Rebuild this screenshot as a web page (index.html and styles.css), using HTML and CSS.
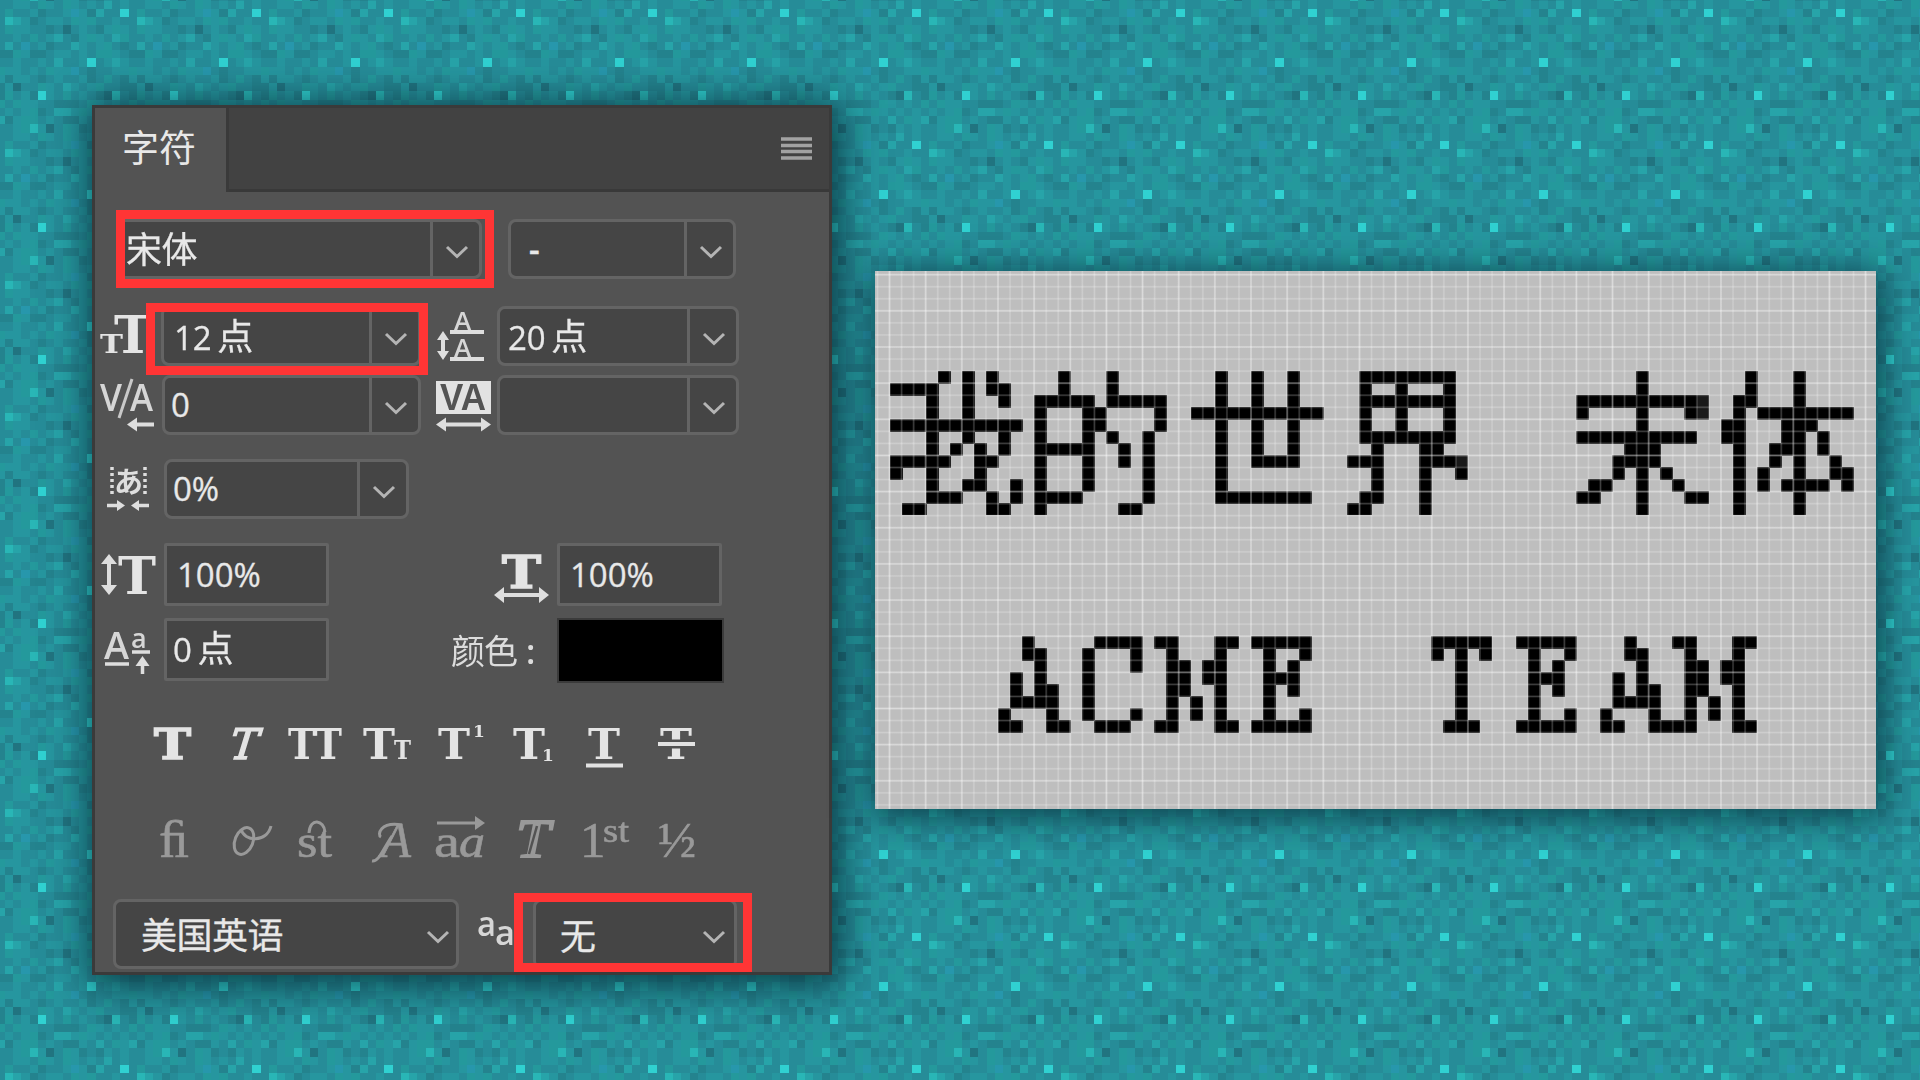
FILE: index.html
```
<!DOCTYPE html>
<html lang="zh-CN">
<head>
<meta charset="utf-8">
<title>字符</title>
<link rel="stylesheet" href="styles.css">
</head>
<body>
<canvas class="backdrop" id="backdrop" width="1920" height="1080"></canvas>
<svg class="defs" width="0" height="0">
  <defs>
    <symbol id="chev" viewBox="0 0 24 14"><path d="M2 2 L12 11.5 L22 2" fill="none" stroke="#b4b4b4" stroke-width="3"/></symbol>
    <filter id="pixelate" filterUnits="userSpaceOnUse" x="0" y="0" width="156" height="144" color-interpolation-filters="sRGB">
      <feGaussianBlur in="SourceGraphic" stdDeviation="2" result="soft"/>
      <feFlood x="6" y="6" width="1" height="1" flood-color="#000" result="dot"/>
      <feOffset in="dot" dx="0" dy="0" x="0" y="0" width="12" height="12" result="cell"/>
      <feTile in="cell" x="0" y="0" width="156" height="144" result="dots"/>
      <feComposite in="soft" in2="dots" operator="in"/>
      <feComponentTransfer><feFuncA type="linear" slope="200" intercept="-76"/></feComponentTransfer>
      <feMorphology operator="dilate" radius="6"/>
    </filter>
  </defs>
</svg>
<main class="stage">
  <section class="panel">
    <header class="tabs">
      <div class="tab">字符</div>
      <svg class="burger" width="31" height="24" viewBox="0 0 31 24"><path d="M0 2H31M0 8.500H31M0 14.500H31M0 21H31" stroke="#a2a2a2" stroke-width="3.600"/></svg>
    </header>
    <div class="row r1">
      <div class="marked font"><div class="field"><span class="cjk">宋体</span><i><svg><use href="#chev"/></svg></i></div></div>
      <div class="field style"><span>-</span><i><svg><use href="#chev"/></svg></i></div>
    </div>
    <div class="row r2">
      <svg class="ic" width="50" height="60"><g class="slab"><text x="0" y="47" font-size="26" textLength="23" lengthAdjust="spacingAndGlyphs">T</text><text x="14" y="47" font-size="53" textLength="38" lengthAdjust="spacingAndGlyphs">T</text></g></svg>
      <div class="marked size"><div class="field"><span>12 <b class="cjk">点</b></span><i><svg><use href="#chev"/></svg></i></div></div>
      <svg class="ic lead" width="50" height="60"><g class="sans"><text x="17" y="24" font-size="26">A</text><text x="17" y="51" font-size="26">A</text></g><path d="M13 26H47M13 53H47M6 31V48" stroke="#dedede" stroke-width="4"/><path d="M6 25l6 9H0zM6 54l6-9H0z" fill="#dedede"/></svg>
      <div class="field wide"><span>20 <b class="cjk">点</b></span><i><svg><use href="#chev"/></svg></i></div>
    </div>
    <div class="row r3">
      <svg class="ic" width="58" height="60"><g class="sans"><text x="0" y="36" font-size="37" textLength="22" lengthAdjust="spacingAndGlyphs">V</text><text x="30" y="36" font-size="37" textLength="23" lengthAdjust="spacingAndGlyphs">A</text></g><path d="M32 4L19 43" stroke="#c8c8c8" stroke-width="3"/><path d="M34 49.500H54" stroke="#dedede" stroke-width="4"/><path d="M27 49.500l10-7v14z" fill="#dedede"/></svg>
      <div class="field kern"><span>0</span><i><svg><use href="#chev"/></svg></i></div>
      <svg class="ic track" width="56" height="60"><rect x="0" y="6" width="55" height="33" fill="#e2e2e2"/><text class="va" x="4" y="35" font-size="36" textLength="46" lengthAdjust="spacingAndGlyphs">VA</text><path d="M8 49.500H47" stroke="#dedede" stroke-width="4"/><path d="M0 49.500l10-7v14zM55 49.500l-10-7v14z" fill="#dedede"/></svg>
      <div class="field wide"><span></span><i><svg><use href="#chev"/></svg></i></div>
    </div>
    <div class="row r4">
      <svg class="ic" width="44" height="60"><path d="M5 8V37M38 8V37" stroke="#dedede" stroke-width="3.500" stroke-dasharray="3 3"/><text class="kana" x="7" y="34" font-size="29">あ</text><path d="M0 46.500H12M42 46.500H30" stroke="#dedede" stroke-width="3.500"/><path d="M18 46.500l-8-5.500v11zM24 46.500l8-5.500v11z" fill="#dedede"/></svg>
      <div class="field tsume"><span>0%</span><i><svg><use href="#chev"/></svg></i></div>
    </div>
    <div class="row r5">
      <svg class="ic" width="58" height="62"><path d="M8 18V43" stroke="#dedede" stroke-width="4"/><path d="M8 11l8 10H0zM8 52l8-10H0z" fill="#dedede"/><text class="slab" x="17" y="51" font-size="52" textLength="38" lengthAdjust="spacingAndGlyphs">T</text></svg>
      <div class="field plain"><span>100%</span></div>
      <svg class="ic hs" width="56" height="62"><text class="slab thick" x="8" y="44.500" font-size="44" textLength="39" lengthAdjust="spacingAndGlyphs">T</text><path d="M8 52H47" stroke="#dedede" stroke-width="4"/><path d="M0 52l10-8v16zM55 52l-10-8v16z" fill="#dedede"/></svg>
      <div class="field plain"><span>100%</span></div>
    </div>
    <div class="row r6">
      <svg class="ic" width="50" height="64"><g class="sans"><text x="0" y="41" font-size="37" textLength="25" lengthAdjust="spacingAndGlyphs">A</text><text x="27" y="30" font-size="27">a</text></g><path d="M1 46H25M28 34H46M38.500 44V56" stroke="#dedede" stroke-width="3.500"/><path d="M38.500 38l7 10h-14z" fill="#dedede"/></svg>
      <div class="field plain zero"><span>0 <b class="cjk">点</b></span></div>
      <div class="label">颜色<b>:</b></div>
      <div class="swatch"></div>
    </div>
    <div class="row r7">
      <svg class="strip" width="640" height="60" viewBox="135 710 640 60"><g class="slab" font-size="42">
        <text x="154" y="759.500" textLength="37" lengthAdjust="spacingAndGlyphs" class="heavy">T</text>
        <text transform="translate(226 759.500) skewX(-17)" textLength="28" lengthAdjust="spacingAndGlyphs" x="0" y="0" class="lt">T</text>
        <text x="288" y="759.500" textLength="54" lengthAdjust="spacingAndGlyphs">TT</text>
        <text x="363" y="759.500" textLength="32" lengthAdjust="spacingAndGlyphs">T</text><text x="394" y="759.500" font-size="26" textLength="17" lengthAdjust="spacingAndGlyphs">T</text>
        <text x="438" y="759.500" textLength="32" lengthAdjust="spacingAndGlyphs">T</text><text x="473" y="738" font-size="17">1</text>
        <text x="513" y="759.500" textLength="32" lengthAdjust="spacingAndGlyphs">T</text><text x="542" y="762" font-size="17">1</text>
        <text x="588" y="759.500" textLength="32" lengthAdjust="spacingAndGlyphs">T</text>
        <text x="660" y="759.500" textLength="32" lengthAdjust="spacingAndGlyphs">T</text></g>
        <path d="M586 766.500H623" stroke="#e2e2e2" stroke-width="4"/><path d="M658 745H695" stroke="#535353" stroke-width="9"/><path d="M658 745H695" stroke="#e2e2e2" stroke-width="4"/></svg>
    </div>
    <div class="row r8">
      <svg class="strip" width="640" height="60" viewBox="135 810 640 60"><g class="old" font-size="46">
        <text x="159" y="857" font-size="52" textLength="30" lengthAdjust="spacingAndGlyphs">ﬁ</text>
        <text x="297" y="857" textLength="35" lengthAdjust="spacingAndGlyphs">st</text>
        <text x="434" y="857" textLength="26" lengthAdjust="spacingAndGlyphs">a</text><text x="459" y="857" font-style="italic" textLength="26" lengthAdjust="spacingAndGlyphs">a</text>
        <text x="381" y="857" font-size="51" font-style="italic" textLength="30" lengthAdjust="spacingAndGlyphs">A</text>
        <text x="516" y="857" font-size="54" font-style="italic" textLength="34" lengthAdjust="spacingAndGlyphs" class="open">T</text>
        <text x="580" y="857" font-size="51">1</text><text x="603" y="842" font-size="33" textLength="26" lengthAdjust="spacingAndGlyphs">st</text>
        <text x="658" y="857" font-size="50" textLength="38" lengthAdjust="spacingAndGlyphs">½</text></g>
        <g fill="none" stroke="#999" stroke-width="3"><ellipse cx="244" cy="841" rx="9" ry="14" transform="rotate(22 244 841)"/><path d="M241 829c3 13 26 14 30-3M309 833c1-16 15-13 16-1M402 825c-22-4-25 10-21 12M392 836c-9 13-13 26-20 25M437 823H478"/></g><path d="M475 816l10 7-10 7z" fill="#999"/><path d="M537 826l-8 28" stroke="#535353" stroke-width="2.500"/></svg>
    </div>
    <div class="row r9">
      <div class="field lang"><span class="cjk">美国英语</span><i><svg><use href="#chev"/></svg></i></div>
      <svg class="ic aa" width="40" height="60"><g class="sans"><text x="0" y="37" font-size="35" textLength="19" lengthAdjust="spacingAndGlyphs">a</text><text x="18" y="46" font-size="35" textLength="20" lengthAdjust="spacingAndGlyphs">a</text></g></svg>
      <div class="marked none"><div class="field"><span class="cjk">无</span><i><svg><use href="#chev"/></svg></i></div></div>
    </div>
  </section>
  <section class="sheet">
    <svg class="art" width="1001" height="538" viewBox="875 271 1001 538">
      <g class="hanzi">
        <g transform="translate(890 371)" filter="url(#pixelate)"><text transform="translate(-5 131) scale(.92 1)">我</text></g>
        <g transform="translate(1034 371)" filter="url(#pixelate)"><text transform="translate(-9 131) scale(.95 1)">的</text></g>
        <g transform="translate(1191 371)" filter="url(#pixelate)"><text transform="translate(-5 132) scale(.92 1)">世</text></g>
        <g transform="translate(1335 371)" filter="url(#pixelate)"><text transform="translate(-2 130) scale(.92 1)">界</text></g>
        <g transform="translate(1576 371)" filter="url(#pixelate)"><text transform="translate(-6 132.500) scale(.93 1)">宋</text></g>
        <g transform="translate(1721 371)" filter="url(#pixelate)"><text transform="translate(-5 131) scale(.92 1)">体</text></g>
      </g>
      <g class="latin">
        <g transform="translate(998 636)" filter="url(#pixelate)"><text class="fine" x="-2" y="96" textLength="74" lengthAdjust="spacingAndGlyphs">A</text></g>
        <g transform="translate(1082 636)" filter="url(#pixelate)"><text x="-3" y="96" textLength="66" lengthAdjust="spacingAndGlyphs">C</text></g>
        <g transform="translate(1154 636)" filter="url(#pixelate)"><text x="0" y="96" textLength="84" lengthAdjust="spacingAndGlyphs">M</text></g>
        <g transform="translate(1251 636)" filter="url(#pixelate)"><text x="-1" y="96" textLength="63" lengthAdjust="spacingAndGlyphs">E</text></g>
        <g transform="translate(1431 636)" filter="url(#pixelate)"><text x="2" y="96" textLength="57" lengthAdjust="spacingAndGlyphs">T</text></g>
        <g transform="translate(1516 636)" filter="url(#pixelate)"><text x="-1" y="96" textLength="63" lengthAdjust="spacingAndGlyphs">E</text></g>
        <g transform="translate(1600 636)" filter="url(#pixelate)"><text class="fine" x="-2" y="96" textLength="74" lengthAdjust="spacingAndGlyphs">A</text></g>
        <g transform="translate(1672 636)" filter="url(#pixelate)"><text x="0" y="96" textLength="84" lengthAdjust="spacingAndGlyphs">M</text></g>
      </g>
    </svg>
  </section>
</main>
<script src="backdrop.js"></script>
</body>
</html>
```
FILE: styles.css
```
*, *::after { box-sizing: border-box; }
body { margin: 0; width: 1920px; height: 1080px; overflow: hidden; background: #25919a; font-family: "Open Sans", "Noto Sans CJK SC", sans-serif; }
.backdrop { position: absolute; left: 0; top: 0; }
.defs { position: absolute; }
.stage { position: relative; height: 1080px; padding: 105px 44px 0 92px; display: flex; align-items: flex-start; justify-content: space-between; }
.panel { width: 740px; height: 870px; border: 3px solid #3a3a3a; background: #535353; box-shadow: 3px 5px 36px 6px rgba(0, 28, 38, .7); color: #e8e8e8; }
.tabs { height: 84px; display: flex; justify-content: space-between; align-items: center; background: #424242; border-bottom: 3px solid #393939; }
.tab { width: 134px; height: 84px; align-self: flex-start; background: #535353; border-right: 3px solid #3a3a3a; font: 37px/77px "Noto Sans CJK SC", sans-serif; padding-left: 27px; }
.burger { margin-right: 17px; margin-top: 1px; }
.row { display: flex; }
.r1 { margin-top: 27px; }
.r2 { margin-top: 27px; padding-left: 5px; }
.r3 { margin-top: 9px; padding-left: 5px; }
.r4 { margin-top: 24px; padding-left: 12px; }
.r5 { margin-top: 24px; padding-left: 6px; }
.r6 { margin-top: 12px; padding-left: 9px; }
.r7 { margin-top: 26px; padding-left: 40px; }
.r8 { margin-top: 41px; padding-left: 40px; }
.r9 { margin-top: 29px; padding-left: 18px; }
.field { display: flex; height: 60px; border: 3px solid #646464; border-radius: 8px; background: #454545; font-size: 33px; line-height: 54px; white-space: pre; }
.field span { flex: 1; padding-left: 10px; letter-spacing: 0; -webkit-text-stroke: .3px #e8e8e8; }
.field i { width: 49px; border-left: 3px solid #646464; display: flex; align-items: center; justify-content: center; }
.field i svg { width: 24px; height: 14px; margin: 5px 0 0 2px; }
.cjk { font: 36px/50px "Noto Sans CJK SC", sans-serif; letter-spacing: -.5px; }
.field span.cjk { letter-spacing: -.5px; }
b.cjk { font-weight: 400; margin-left: -3px; }
.marked { position: relative; }
.marked::after { content: ""; position: absolute; border: 9px solid #ff3535; }
.font { width: 365px; margin-left: 22px; }
.font .field span { padding-left: 6px; }
.font::after { left: -1px; top: -9px; width: 378px; height: 78px; }
.style { width: 228px; margin-left: 26px; }
.style span { padding-left: 18px; font-weight: 600; }
.size { width: 260px; margin-left: 11px; }
.size::after { left: -15px; top: -3px; width: 282px; height: 72px; }
.size + .lead { margin-left: 16px; }
.lead + .wide { margin-left: 10px; }
.wide { width: 242px; }
.wide span { padding-left: 8px; }
.kern { width: 259px; margin-left: 4px; }
.kern span { padding-left: 6px; }
.track { margin-left: 15px; }
.track + .wide { margin-left: 5px; }
.tsume { width: 245px; margin-left: 13px; }
.tsume span { padding-left: 6px; }
.plain { width: 165px; height: 63px; border-radius: 2px; line-height: 57px; margin-left: 5px; }
.plain.zero { margin-left: 10px; }
.zero span { padding-left: 6px; }
.hs { margin-left: 165px; }
.hs + .plain { margin-left: 7px; }
.label { width: 228px; padding-left: 122px; font: 34px/63px "Noto Sans CJK SC", sans-serif; letter-spacing: -1px; white-space: nowrap; color: #dcdcdc; }
.label b { font-family: "Open Sans", sans-serif; font-weight: 600; margin-left: 9px; }
.swatch { width: 167px; height: 65px; background: #000; border: 2px solid #3b3b3b; margin-bottom: -2px; }
.lang, .none .field { height: 70px; }
.field.lang i, .none .field i { border-left: 0; }
.lang { width: 346px; }
.lang span { padding-left: 25px; line-height: 63px; }
.lang i { width: 36px; justify-content: flex-start; }
.field.lang i svg { margin-left: 6px; }
.none .field i { width: 42px; }
.aa { margin-left: 18px; }
.none { width: 204px; margin-left: 16px; }
.none .field span { padding-left: 24px; line-height: 64px; }
.none::after { left: -19px; top: -6px; width: 238px; height: 79px; }
.ic { flex: none; overflow: visible; }
.slab text, text.slab { font-family: "DejaVu Serif", serif; font-weight: 700; fill: #e4e4e4; }
.slab .heavy, text.thick { stroke: #e4e4e4; stroke-width: 1.5px; }
.slab .lt { font-weight: 400; stroke: #e4e4e4; stroke-width: 1.5px; }
.sans text { font-family: "Open Sans", sans-serif; font-weight: 600; fill: #d6d6d6; }
.va { font-family: "Liberation Sans", sans-serif; font-weight: 700; fill: #535353; }
.kana { font-family: "Noto Sans CJK JP", sans-serif; font-weight: 700; fill: #dedede; }
.old text { font-family: "Liberation Serif", serif; fill: #999; stroke: #999; stroke-width: .6px; }
.old .open { stroke-width: 2px; }
.sheet { width: 1001px; height: 538px; margin-top: 166px; background: #bebebe; box-shadow: 3px 5px 32px 4px rgba(0, 28, 38, .65); position: relative; }
.sheet::after { content: ""; position: absolute; inset: 0; background:
  repeating-linear-gradient(90deg, transparent 0 13px, rgba(255,255,255,.26) 14.5px, transparent 16px 36.15px),
  repeating-linear-gradient(180deg, transparent 0 2.2px, rgba(255,255,255,.26) 3.7px, transparent 5.2px 36.15px),
  repeating-linear-gradient(90deg, transparent 0 1px, rgba(255,255,255,.25) 2.5px, transparent 4px 12.05px),
  repeating-linear-gradient(180deg, transparent 0 2.2px, rgba(255,255,255,.25) 3.7px, transparent 5.2px 12.05px); }
.art { display: block; }
.hanzi text { font: 400 154px "Noto Sans CJK SC", sans-serif; fill: #000; }
.latin text { font: 400 130px "DejaVu Serif", serif; fill: #000; stroke: #000; stroke-width: 3px; }
.latin .fine { stroke-width: 2px; }
```
FILE: backdrop.js
```
// 16 x 16 block texture, repeated over the whole page
const shades = { n: "#217480", a: "#24838e", b: "#268c98", c: "#26969f", e: "#24999c", d: "#27a4a9", g: "#29b6b6", h: "#30d1d1", u: "#2797ac" };
const tile = [
  "bccbecbecbcbdbcb",
  "ebbcabbcucadbbhb",
  "gdcabccbecebbcbb",
  "eccbbabnbcbacecb",
  "bcbebcdbacecbdeb",
  "dbubcabbdcbcebab",
  "aecaabccbcbeecba",
  "bcbbcbdbbchbcdcb",
  "ccbcbeccubabbcce",
  "accbabcbbcabebac",
  "cnbbecbdcbcebbaa",
  "ebcahcbebcbangba",
  "beccbbaaabecbcbe",
  "cbceabddcecbcbcb",
  "aceebcbaacbdbecd",
  "bcegcnbecabacbcb"
];
const ctx = document.getElementById("backdrop").getContext("2d");
const step = 8.25;
for (let r = -1; r < 132; r++) {
  for (let c = -1; c < 234; c++) {
    const x0 = Math.round(4.8 + c * step), x1 = Math.round(4.8 + (c + 1) * step);
    const y0 = Math.round(0.6 + r * step), y1 = Math.round(0.6 + (r + 1) * step);
    ctx.fillStyle = shades[tile[(r + 16) % 16][(c + 16) % 16]];
    ctx.fillRect(x0, y0, x1 - x0, y1 - y0);
  }
}
```
